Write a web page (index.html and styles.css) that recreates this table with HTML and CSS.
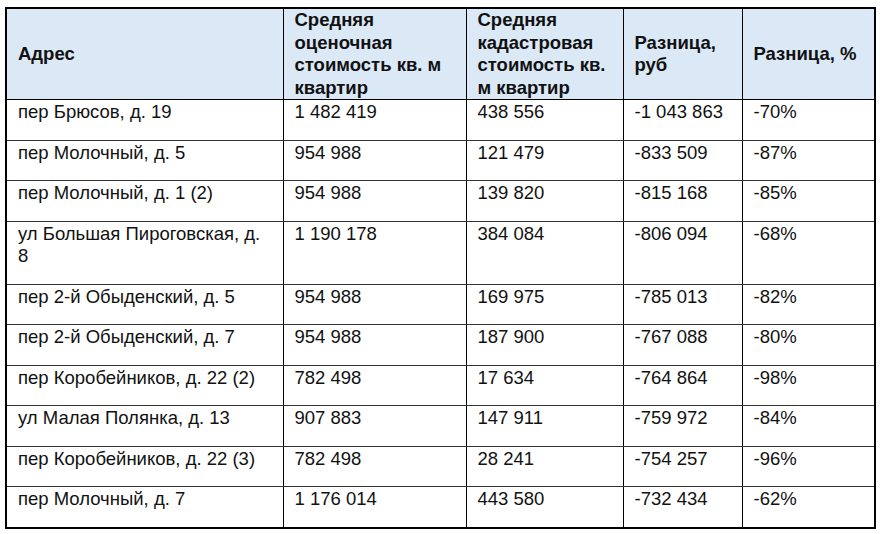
FILE: index.html
```html
<!DOCTYPE html>
<html lang="ru">
<head>
<meta charset="utf-8">
<link rel="stylesheet" href="styles.css">
</head>
<body>
<div class="wrap">
<table class="data">
<colgroup>
<col class="c1"><col class="c2"><col class="c3"><col class="c4"><col class="c5">
</colgroup>
<thead>
<tr>
<th>Адрес</th>
<th>Средняя оценочная стоимость кв. м квартир</th>
<th>Средняя кадастровая стоимость кв. м квартир</th>
<th>Разница, руб</th>
<th>Разница, %</th>
</tr>
</thead>
<tbody>
<tr><td>пер Брюсов, д. 19</td><td>1 482 419</td><td>438 556</td><td>-1 043 863</td><td>-70%</td></tr>
<tr><td>пер Молочный, д. 5</td><td>954 988</td><td>121 479</td><td>-833 509</td><td>-87%</td></tr>
<tr><td>пер Молочный, д. 1 (2)</td><td>954 988</td><td>139 820</td><td>-815 168</td><td>-85%</td></tr>
<tr><td>ул Большая Пироговская, д. 8</td><td>1 190 178</td><td>384 084</td><td>-806 094</td><td>-68%</td></tr>
<tr><td>пер 2-й Обыденский, д. 5</td><td>954 988</td><td>169 975</td><td>-785 013</td><td>-82%</td></tr>
<tr><td>пер 2-й Обыденский, д. 7</td><td>954 988</td><td>187 900</td><td>-767 088</td><td>-80%</td></tr>
<tr><td>пер Коробейников, д. 22 (2)</td><td>782 498</td><td>17 634</td><td>-764 864</td><td>-98%</td></tr>
<tr><td>ул Малая Полянка, д. 13</td><td>907 883</td><td>147 911</td><td>-759 972</td><td>-84%</td></tr>
<tr><td>пер Коробейников, д. 22 (3)</td><td>782 498</td><td>28 241</td><td>-754 257</td><td>-96%</td></tr>
<tr><td>пер Молочный, д. 7</td><td>1 176 014</td><td>443 580</td><td>-732 434</td><td>-62%</td></tr>
</tbody>
</table>
</div>
</body>
</html>
```
FILE: styles.css
```css
html, body {
  margin: 0;
  padding: 0;
  background: #ffffff;
}
.wrap {
  padding: 7px 0 0 5px;
}
.data {
  border-collapse: collapse;
  table-layout: fixed;
  width: 869px;
  border: 2px solid #000;
  font-family: "Liberation Sans", Arial, sans-serif;
  font-size: 18.5px;
  line-height: 22.5px;
  color: #111;
}
.c1 { width: 277px; }
.c2 { width: 183px; }
.c3 { width: 157px; }
.c4 { width: 119px; }
.c5 { width: 133px; }
.data th,
.data td {
  border: 1px solid #000;
  text-align: left;
  padding: 0 12px 0 11px;
}
.data th {
  background: #dbe8f6;
  font-weight: bold;
  vertical-align: middle;
  padding-top: 0;
  padding-bottom: 0;
  height: 89px;
}
.data td {
  vertical-align: top;
  padding-top: 1px;
  padding-bottom: 16px;
  font-weight: normal;
}
.data tbody tr td {
  border-top-color: #333;
  border-bottom-color: #333;
}
```
